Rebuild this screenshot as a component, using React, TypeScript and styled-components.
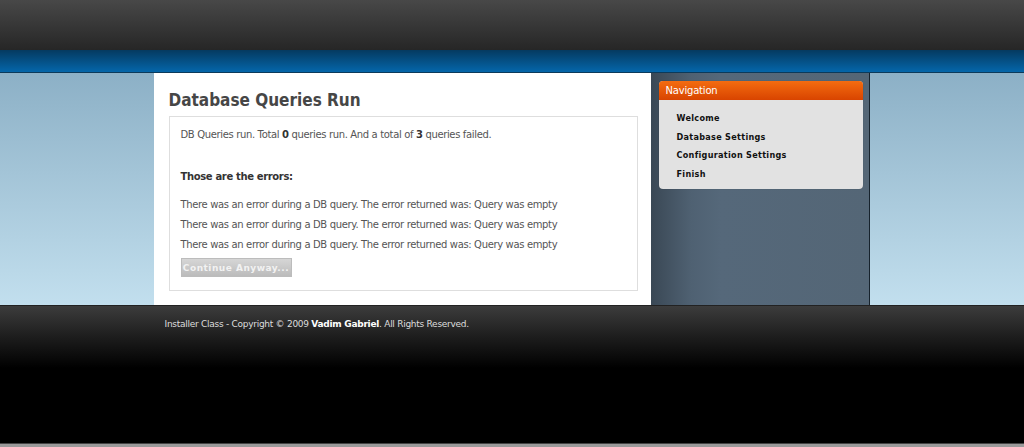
import React from "react";
import styled, { createGlobalStyle } from "styled-components";

const Global = createGlobalStyle`
  html, body { margin: 0; padding: 0; background: #000; }
  body { font-family: "DejaVu Sans", Verdana, sans-serif; }
`;

const Page = styled.div`
  width: 100%;
  height: 447px;
  display: flex;
  flex-direction: column;
  overflow: hidden;
`;

const TopBar = styled.div`
  height: 50px;
  background: linear-gradient(#484848, #262626);
`;

const BlueBar = styled.div`
  height: 22px;
  background: linear-gradient(#053a60, #0466aa);
  border-bottom: 1px solid #0c3a5a;
`;

const Main = styled.div`
  height: 232px;
  background: linear-gradient(#8cb0c6, #c2dfee);
  display: flex;
  justify-content: center;
`;

const Container = styled.div`
  width: 717px;
  display: flex;
`;

const Content = styled.div`
  width: 497px;
  background: #fff;
  padding: 16px 13px 0 15px;
  box-sizing: border-box;
`;

const Title = styled.h1`
  margin: 0 0 5px;
  font-family: "DejaVu Sans Condensed", "DejaVu Sans", Verdana, sans-serif;
  font-stretch: condensed;
  font-weight: bold;
  font-size: 17px;
  line-height: 22px;
  color: #464646;
`;

const Box = styled.div`
  border: 1px solid #dedede;
  height: 175px;
  box-sizing: border-box;
  padding: 10px 11px 0;
  font-size: 10px;
  letter-spacing: -0.35px;
  color: #555;
`;

const Line = styled.p<{ $gap?: number }>`
  margin: ${(p) => p.$gap ?? 0}px 0 0;
  line-height: 16px;
  strong { color: #333; }
`;

const Heading = styled.p`
  margin: 26px 0 12px;
  line-height: 16px;
  font-weight: bold;
  color: #333;
`;

const Button = styled.button`
  margin-top: 5px;
  width: 111px;
  height: 19px;
  border: 1px solid #bcbcbc;
  background: linear-gradient(#d6d6d6, #bbbbbb);
  color: #f2f2f2;
  font-family: "DejaVu Sans", Verdana, sans-serif;
  font-weight: bold;
  font-size: 9px;
  letter-spacing: 0.5px;
  padding: 0;
`;

const Sidebar = styled.div`
  width: 219px;
  box-sizing: border-box;
  border-right: 1px solid #16222c;
  background: linear-gradient(90deg, #3a4855 0px, #4f6172 40px, #55687a 70px, #546676 100%);
  padding: 8px 6px 0 8px;
`;

const NavBox = styled.div`
  background: #e2e2e2;
  border-radius: 4px;
  overflow: hidden;
  height: 108px;
  box-shadow: 0 0 1px rgba(0,0,0,0.3);
`;

const NavHead = styled.div`
  height: 19px;
  background: linear-gradient(#f46c10, #d84400);
  color: #fff;
  font-size: 10px;
  letter-spacing: -0.2px;
  line-height: 19px;
  padding-left: 7px;
`;

const NavList = styled.ul`
  list-style: none;
  margin: 0;
  padding: 9px 0 0 18px;
`;

const NavItem = styled.li`
  font-family: "DejaVu Sans Condensed", "DejaVu Sans", Verdana, sans-serif;
  font-stretch: condensed;
  font-size: 9px;
  font-weight: bold;
  letter-spacing: 0.3px;
  color: #111;
  line-height: 18.7px;
`;

const Footer = styled.div`
  flex: 1;
  background: linear-gradient(#3c3c3c 0px, #1e1e1e 30px, #000 62px, #000 100%);
  border-top: 1px solid #222;
  display: flex;
  flex-direction: column;
`;

const FooterInner = styled.div`
  flex: 1;
  width: 717px;
  margin: 0 auto;
  padding: 13px 0 0 11px;
  box-sizing: border-box;
  font-size: 9px;
  letter-spacing: -0.27px;
  color: #ddd;
  b { color: #fff; }
`;

const BottomLine = styled.div`
  height: 3px;
  background: #9a9a9a;
  border-top: 1px solid #444;
`;

const errors = [1, 2, 3];
const nav = ["Welcome", "Database Settings", "Configuration Settings", "Finish"];

export default function App() {
  return (
    <Page>
      <Global />
      <TopBar />
      <BlueBar />
      <Main>
        <Container>
          <Content>
            <Title>Database Queries Run</Title>
            <Box>
              <Line>
                DB Queries run. Total <strong>0</strong> queries run. And a total of <strong>3</strong> queries failed.
              </Line>
              <Heading>Those are the errors:</Heading>
              {errors.map((e, i) => (
                <Line key={e} $gap={i === 0 ? 0 : 4}>
                  There was an error during a DB query. The error returned was: Query was empty
                </Line>
              ))}
              <Button>Continue Anyway...</Button>
            </Box>
          </Content>
          <Sidebar>
            <NavBox>
              <NavHead>Navigation</NavHead>
              <NavList>
                {nav.map((n) => (
                  <NavItem key={n}>{n}</NavItem>
                ))}
              </NavList>
            </NavBox>
          </Sidebar>
        </Container>
      </Main>
      <Footer>
        <FooterInner>
          Installer Class - Copyright © 2009 <b>Vadim Gabriel</b>. All Rights Reserved.
        </FooterInner>
        <BottomLine />
      </Footer>
    </Page>
  );
}
